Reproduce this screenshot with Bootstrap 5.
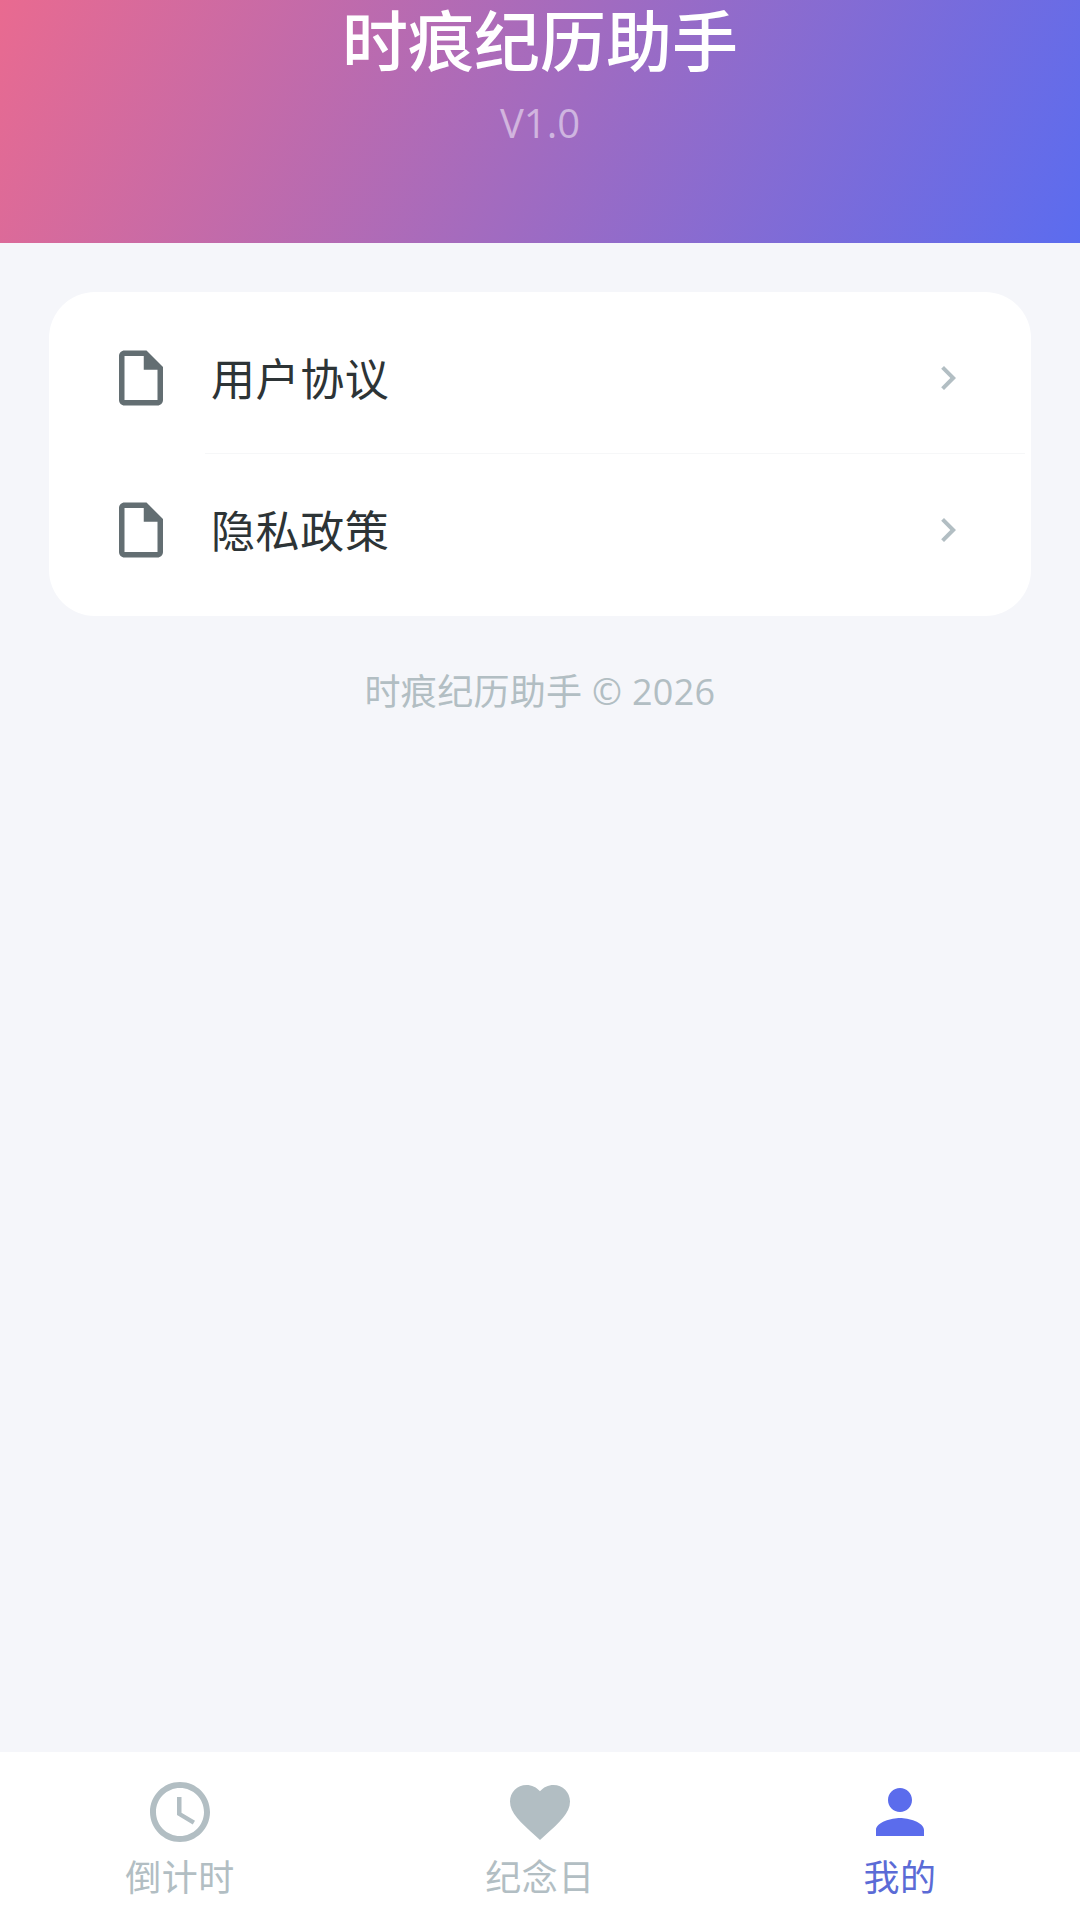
<!doctype html>
<html lang="zh-CN">
<head>
    <meta charset="UTF-8">
    <meta name="viewport" content="width=device-width, initial-scale=1.0">
    <link rel="stylesheet" href="https://cdn.jsdelivr.net/npm/bootstrap@5.3.2/dist/css/bootstrap.min.css">
    <title>时痕纪历助手</title>
    <style>
        html, body { margin: 0; background: #f5f6fa; }
        body { font-family: "Open Sans", "Noto Sans CJK SC", sans-serif; }
        .app-shell { height: 1920px; background: #f5f6fa; overflow: hidden; }
        .hero { height: 243px; background: linear-gradient(115deg, #e96a90 0%, #5b6cef 100%); color: #fff; }
        .hero-title { font-size: 66px; line-height: 80px; font-weight: 500; margin: 0; }
        .hero-version { font-size: 40px; line-height: 56px; margin-top: 15px; color: rgba(255, 255, 255, .5); }
        .menu-card { margin: 49px 49px 0; padding: 10px 0; background: #fff; border-radius: 46px; }
        .menu-row { height: 152px; padding: 0 59px; color: #2d3436; font-size: 44px; letter-spacing: .6px; text-decoration: none; }
        .menu-row span { margin-left: 37px; padding-top: 2px; }
        .menu-line { height: 1px; margin: -1px 6px 0 156px; background: #f6f7f8; }
        .menu-icon { width: 66px; height: 66px; fill: #636e72; flex: none; }
        .menu-arrow { width: 48px; height: 48px; fill: #b2bec3; flex: none; margin-left: auto; }
        .copy-line { margin-top: 49px; font-size: 36px; letter-spacing: .3px; line-height: 54px; color: #b2bec3; text-align: center; }
        .tab-bar { height: 168px; background: #fff; }
        .tab-link { color: #b2bec3; font-size: 36px; letter-spacing: .5px; line-height: 48px; text-decoration: none; padding-top: 24px; }
        .tab-link svg { width: 72px; height: 72px; fill: #b2bec3; display: block; margin-bottom: 6px; }
        .tab-link.on { color: #5b6bd6; }
        .tab-link.on svg { fill: #5b6cec; }
    </style>
</head>
<body>

<div class="app-shell d-flex flex-column">
    <header class="hero text-center">
        <h1 class="hero-title">时痕纪历助手</h1>
        <div class="hero-version">V1.0</div>
    </header>

    <div class="menu-card">
        <a class="menu-row d-flex align-items-center" href="#">
            <svg class="menu-icon" viewBox="0 0 24 24"><path d="M14 2H6c-1.1 0-2 .9-2 2v16c0 1.1.9 2 2 2h12c1.1 0 2-.9 2-2V8l-6-6zM6 20V4h7v5h5v11H6z"/></svg>
            <span>用户协议</span>
            <svg class="menu-arrow" viewBox="0 0 24 24"><path d="M10 6 8.59 7.41 13.17 12l-4.58 4.59L10 18l6-6z"/></svg>
        </a>
        <div class="menu-line"></div>
        <a class="menu-row d-flex align-items-center" href="#">
            <svg class="menu-icon" viewBox="0 0 24 24"><path d="M14 2H6c-1.1 0-2 .9-2 2v16c0 1.1.9 2 2 2h12c1.1 0 2-.9 2-2V8l-6-6zM6 20V4h7v5h5v11H6z"/></svg>
            <span>隐私政策</span>
            <svg class="menu-arrow" viewBox="0 0 24 24"><path d="M10 6 8.59 7.41 13.17 12l-4.58 4.59L10 18l6-6z"/></svg>
        </a>
    </div>

    <div class="copy-line">时痕纪历助手 © 2026</div>

    <nav class="tab-bar mt-auto d-flex">
        <a class="tab-link flex-fill w-100 d-flex flex-column align-items-center" href="#">
            <svg viewBox="0 0 24 24"><path d="M11.99 2C6.47 2 2 6.48 2 12s4.47 10 9.99 10C17.52 22 22 17.52 22 12S17.52 2 11.99 2zM12 20c-4.42 0-8-3.58-8-8s3.58-8 8-8 8 3.58 8 8-3.58 8-8 8zm.5-13H11v6l5.25 3.15.75-1.23-4.5-2.67z"/></svg>
            倒计时
        </a>
        <a class="tab-link flex-fill w-100 d-flex flex-column align-items-center" href="#">
            <svg viewBox="0 0 24 24"><path d="M12 21.35l-1.45-1.32C5.4 15.36 2 12.28 2 8.5 2 5.42 4.42 3 7.5 3c1.74 0 3.41.81 4.5 2.09C13.09 3.81 14.76 3 16.5 3 19.58 3 22 5.42 22 8.5c0 3.78-3.4 6.86-8.55 11.54L12 21.35z"/></svg>
            纪念日
        </a>
        <a class="tab-link on flex-fill w-100 d-flex flex-column align-items-center" href="#">
            <svg viewBox="0 0 24 24"><path d="M12 12c2.21 0 4-1.79 4-4s-1.79-4-4-4-4 1.79-4 4 1.79 4 4 4zm0 2c-2.67 0-8 1.34-8 4v2h16v-2c0-2.66-5.33-4-8-4z"/></svg>
            我的
        </a>
    </nav>
</div>

<script src="https://cdn.jsdelivr.net/npm/bootstrap@5.3.2/dist/js/bootstrap.bundle.min.js"></script>
</body>
</html>
